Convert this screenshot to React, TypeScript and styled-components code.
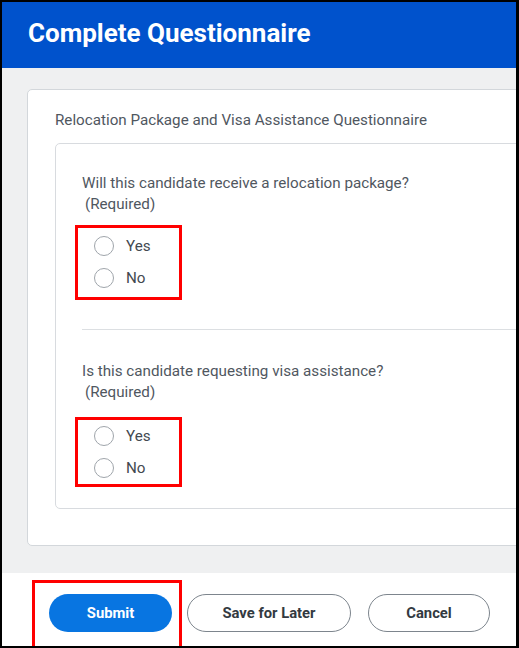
import React from 'react';
import styled, { createGlobalStyle } from 'styled-components';

const GlobalStyle = createGlobalStyle`
  html, body {
    margin: 0;
    padding: 0;
    background: #ffffff;
  }
  body {
    font-family: Roboto, "Liberation Sans", Arial, sans-serif;
  }
`;

const Frame = styled.div`
  box-sizing: border-box;
  width: 519px;
  height: 648px;
  border: 2px solid #000;
  border-right-width: 3px;
  overflow: hidden;
  display: flex;
  flex-direction: column;
  background: #fff;
`;

const Header = styled.header`
  height: 66px;
  flex-shrink: 0;
  background: #0052cc;
  display: flex;
  align-items: center;
  padding-left: 26px;
`;

const Title = styled.h1`
  margin: 0;
  font-size: 26px;
  font-weight: 700;
  color: #fff;
  line-height: 30px;
  margin-top: -4px;
`;

const Main = styled.main`
  height: 505px;
  flex-shrink: 0;
  box-sizing: border-box;
  background: #eff0f1;
  padding: 21px 0 0 25px;
`;

const Card = styled.section`
  box-sizing: border-box;
  height: 457px;
  margin-right: -12px;
  background: #fff;
  border: 1px solid #d3d7db;
  border-radius: 5px;
  padding: 20px 0 0 27px;
`;

const CardTitle = styled.div`
  font-size: 15.2px;
  line-height: 20px;
  color: #50575f;
  margin-bottom: 13px;
`;

const InnerCard = styled.div`
  box-sizing: border-box;
  height: 366px;
  margin-right: -12px;
  border: 1px solid #d8dbdf;
  border-radius: 5px;
  padding: 29px 0 0 26px;
`;

const Question = styled.div<{ $top?: number }>`
  font-size: 15.2px;
  line-height: 21px;
  color: #50575f;
  margin-top: ${p => p.$top ?? 0}px;
`;

const Required = styled.div`
  padding-left: 3px;
`;

const Highlight = styled.div<{ $top: number; $pad: string }>`
  box-sizing: border-box;
  width: 107px;
  margin-left: -7px;
  margin-top: ${p => p.$top}px;
  border: 3px solid #ff0000;
  padding: ${p => p.$pad};
`;

const RadioRow = styled.label`
  display: flex;
  align-items: center;
  height: 32px;
  padding-left: 16px;
  gap: 12px;
  font-size: 15.2px;
  color: #424950;
`;

const Circle = styled.span`
  box-sizing: border-box;
  width: 20px;
  height: 20px;
  border-radius: 50%;
  border: 1.5px solid #9fa5ab;
  background: #fff;
  flex-shrink: 0;
`;

const Divider = styled.hr`
  border: none;
  border-top: 1px solid #dcdfe2;
  margin: 29px 0 0 0;
  height: 0;
`;

const Footer = styled.footer`
  flex: 1;
  display: flex;
  align-items: flex-start;
  padding: 7px 0 0 30px;
  background: #fff;
`;

const SubmitBox = styled.div`
  border: 3px solid #ff0000;
  padding: 11px 7px 20px 14px;
`;

const Button = styled.button<{ $primary?: boolean; $width: number; $gap?: number }>`
  box-sizing: border-box;
  width: ${p => p.$width}px;
  height: 38px;
  border-radius: 19px;
  font-family: Roboto, "Liberation Sans", Arial, sans-serif;
  font-size: 14.8px;
  font-weight: 700;
  cursor: pointer;
  border: ${p => (p.$primary ? 'none' : '1px solid #7d858d')};
  background: ${p => (p.$primary ? '#0875e1' : '#fff')};
  color: ${p => (p.$primary ? '#fff' : '#333a41')};
  margin-left: ${p => p.$gap ?? 0}px;
  margin-top: ${p => (p.$primary ? 0 : 14)}px;
`;

const Radio = ({ label }: { label: string }) => (
  <RadioRow>
    <Circle />
    {label}
  </RadioRow>
);

const App = () => (
  <>
    <GlobalStyle />
    <Frame>
      <Header>
        <Title>Complete Questionnaire</Title>
      </Header>
      <Main>
        <Card>
          <CardTitle>Relocation Package and Visa Assistance Questionnaire</CardTitle>
          <InnerCard>
            <Question>
              Will this candidate receive a relocation package?
              <Required>(Required)</Required>
            </Question>
            <Highlight $top={10} $pad="2px 0 3px">
              <Radio label="Yes" />
              <Radio label="No" />
            </Highlight>
            <Divider />
            <Question $top={31}>
              Is this candidate requesting visa assistance?
              <Required>(Required)</Required>
            </Question>
            <Highlight $top={14} $pad="0">
              <Radio label="Yes" />
              <Radio label="No" />
            </Highlight>
          </InnerCard>
        </Card>
      </Main>
      <Footer>
        <SubmitBox>
          <Button $primary $width={123}>Submit</Button>
        </SubmitBox>
        <Button $width={164} $gap={5}>Save for Later</Button>
        <Button $width={122} $gap={17}>Cancel</Button>
      </Footer>
    </Frame>
  </>
);

export default App;
